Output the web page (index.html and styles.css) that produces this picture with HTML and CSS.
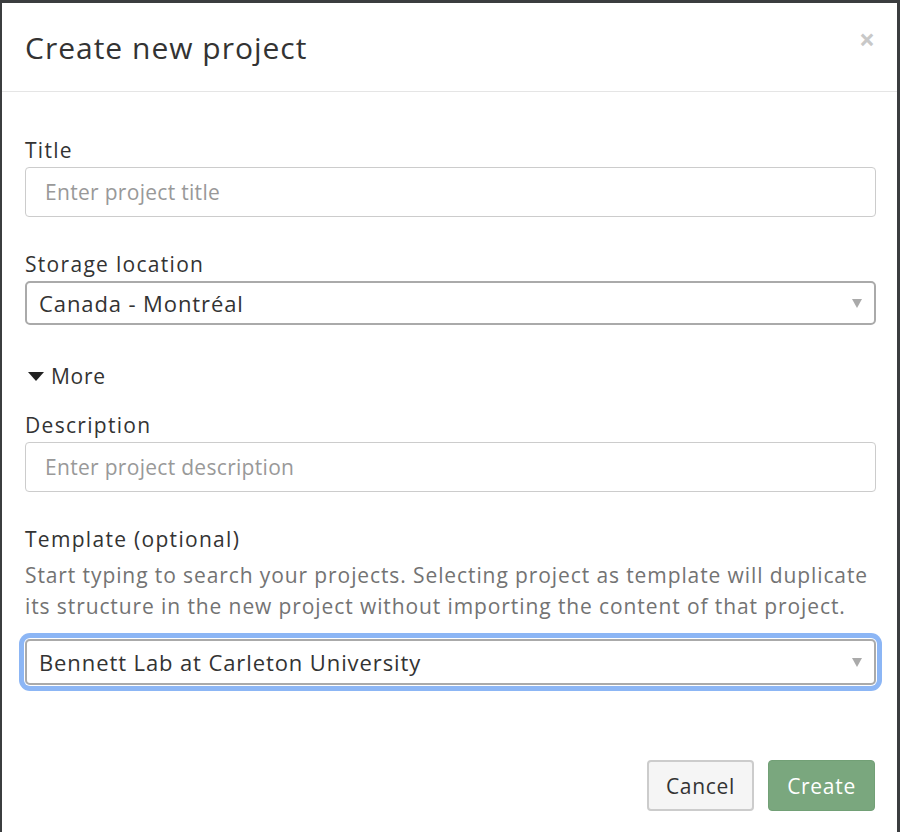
FILE: index.html
```html
<!DOCTYPE html>
<html>
<head>
<meta charset="utf-8">
<link rel="stylesheet" href="styles.css">
</head>
<body>
<div class="modal">
  <div class="modal-header">
    <h4 class="modal-title">Create new project</h4>
    <span class="close">&times;</span>
  </div>
  <div class="modal-body">
    <div class="group">
      <label class="label">Title</label>
      <div class="input placeholder">Enter project title</div>
    </div>
    <div class="group">
      <label class="label">Storage location</label>
      <div class="select">
        <span>Canada - Montréal</span>
        <span class="arrow"></span>
      </div>
    </div>
    <div class="more">
      <svg class="caret" width="16" height="9" viewBox="0 0 16 9"><path d="M0 0 H16 L8 9 Z" fill="#222"/></svg>
      <span>More</span>
    </div>
    <div class="group">
      <label class="label">Description</label>
      <div class="input placeholder">Enter project description</div>
    </div>
    <div class="group">
      <label class="label">Template (optional)</label>
      <p class="help">Start typing to search your projects. Selecting project as template will duplicate its structure in the new project without importing the content of that project.</p>
      <div class="select focused">
        <span>Bennett Lab at Carleton University</span>
        <span class="arrow"></span>
      </div>
    </div>
  </div>
  <div class="modal-footer">
    <button class="btn btn-default">Cancel</button>
    <button class="btn btn-success">Create</button>
  </div>
</div>
</body>
</html>
```
FILE: styles.css
```css
html, body {
  margin: 0;
  padding: 0;
  height: 100%;
}
body {
  background: #3b3d3f;
  font-family: "Open Sans", "Liberation Sans", sans-serif;
  color: #333;
  overflow: hidden;
  letter-spacing: 0.7px;
}
.modal {
  margin: 3px 3px 0 2px;
  background: #fff;
  height: 900px;
}
.modal-header {
  height: 89px;
  border-bottom: 1px solid #e5e5e5;
  display: flex;
  align-items: center;
  justify-content: space-between;
  padding: 0 23px 0 23px;
  box-sizing: border-box;
}
.modal-title {
  margin: 0;
  font-size: 30px;
  font-weight: 400;
  color: #333;
  line-height: 1;
  letter-spacing: 1px;
  padding-top: 2px;
}
.close {
  font-size: 28px;
  font-weight: 700;
  color: #c8c8c8;
  line-height: 1;
  margin-top: -16px;
  margin-right: -1px;
  letter-spacing: 0;
}
.modal-body {
  padding: 44px 21px 0 23px;
}
.group {
  margin-bottom: 33px;
}
.label {
  display: block;
  font-size: 21px;
  line-height: 28px;
  margin-bottom: 3px;
  letter-spacing: 1.3px;
}
.input {
  height: 50px;
  box-sizing: border-box;
  border: 1px solid #ccc;
  border-radius: 4px;
  padding: 0 19px;
  display: flex;
  align-items: center;
  font-size: 21px;
}
.placeholder {
  color: #999;
  letter-spacing: 0.3px;
}
.select {
  height: 44px;
  box-sizing: border-box;
  border: 2px solid #aaa;
  border-radius: 5px;
  padding: 0 12px 0 12px;
  display: flex;
  align-items: center;
  justify-content: space-between;
  font-size: 22px;
  letter-spacing: 0.9px;
  color: #333;
}
.arrow {
  width: 0;
  height: 0;
  border-left: 5px solid transparent;
  border-right: 5px solid transparent;
  border-top: 9px solid #aaa;
  margin-top: 1px;
}
.select.focused {
  height: 46px;
  box-shadow: 0 0 0 1px #fff, 0 0 0 6px #8cb6f5;
  border-radius: 5px;
}
.more {
  display: flex;
  align-items: center;
  gap: 7px;
  font-size: 21px;
  line-height: 28px;
  margin-top: 37px;
  margin-bottom: 21px;
  padding-left: 3px;
}
.more .caret {
  margin-top: 1px;
}
.help {
  margin: 7px 0 17px;
  font-size: 21px;
  line-height: 31px;
  letter-spacing: 0.9px;
  color: #737373;
}
.modal-footer {
  display: flex;
  justify-content: flex-end;
  gap: 14px;
  padding: 42px 22px 0 0;
}
.btn {
  width: 107px;
  height: 51px;
  box-sizing: border-box;
  border-radius: 4px;
  font-family: "Open Sans", "Liberation Sans", sans-serif;
  font-size: 21px;
  letter-spacing: 0.7px;
  cursor: pointer;
}
.btn-default {
  background: #f5f5f5;
  border: 2px solid #ccc;
  color: #333;
}
.btn-success {
  background: #7aa77e;
  border: 1px solid #72a076;
  color: #fff;
}
```
